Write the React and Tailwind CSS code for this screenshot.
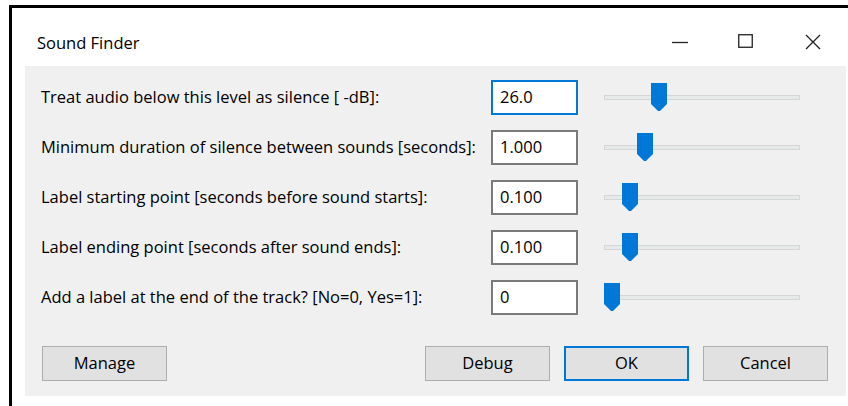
import React from "react";

const rows = [
    { label: "Treat audio below this level as silence [ -dB]:", value: "26.0", thumb: 47, focused: true },
    { label: "Minimum duration of silence between sounds [seconds]:", value: "1.000", thumb: 33 },
    { label: "Label starting point [seconds before sound starts]:", value: "0.100", thumb: 18 },
    { label: "Label ending point [seconds after sound ends]:", value: "0.100", thumb: 18 },
    { label: "Add a label at the end of the track? [No=0, Yes=1]:", value: "0", thumb: 0 },
];

const Slider = ({ pos }) => (
    <div className="relative w-[196px] h-[35px] flex items-center">
        <div className="w-full h-[5px] bg-[#e7eaea] border border-[#d6d6d6]" />
        <svg
            className="absolute top-[3px]"
            style={{ left: pos }}
            width="16"
            height="28"
            viewBox="0 0 16 28"
        >
            <path d="M0 0 H16 V21 L9 28 H7 L0 21 Z" fill="#0078d7" />
        </svg>
    </div>
);

const WinButton = ({ children, primary }) => (
    <button
        className={`h-[35px] w-[125px] bg-[#e1e1e1] text-[16.5px] text-black ${
            primary ? "border-2 border-[#0078d7]" : "border border-[#adadad]"
        }`}
    >
        {children}
    </button>
);

export default function App() {
    return (
        <div
            className="w-[848px] h-[406px] bg-white pt-[5px] pl-[9px] flex overflow-hidden"
            style={{ fontFamily: '"Open Sans", "Noto Sans", sans-serif' }}
        >
            <div className="flex-1 flex flex-col bg-white border-l-[3px] border-t-[3px] border-black">
                {/* Title bar */}
                <div className="h-[58px] flex items-center pl-[25px] pt-[12px]">
                    <span className="text-[16.5px] text-black leading-none">Sound Finder</span>
                    <div className="ml-auto flex items-center -mt-[3px]">
                        <svg width="16" height="16" viewBox="0 0 16 16" className="mr-[50px]">
                            <path d="M0 8.5 H16" stroke="#222" strokeWidth="1.3" />
                        </svg>
                        <svg width="15" height="15" viewBox="0 0 15 15" className="mr-[52px]">
                            <rect x="0.75" y="0.75" width="13.5" height="12.5" fill="none" stroke="#222" strokeWidth="1.3" />
                        </svg>
                        <svg width="16" height="16" viewBox="0 0 16 16" className="mr-[27px]">
                            <path d="M1 1 L15 15 M15 1 L1 15" stroke="#222" strokeWidth="1.3" />
                        </svg>
                    </div>
                </div>

                {/* Parameters panel */}
                <div className="ml-[13px] mr-[2px] bg-[#f0f0f0] pt-[14px] pb-[15px] flex flex-col">
                    <div className="flex flex-col gap-[15px]">
                        {rows.map((row) => (
                            <div key={row.label} className="flex items-center h-[35px]">
                                <span className="w-[466px] pl-[16px] text-[16.5px] text-black whitespace-nowrap">
                                    {row.label}
                                </span>
                                <div
                                    className={`w-[87px] h-[35px] bg-white flex items-center pl-[7px] text-[16.5px] text-black ${
                                        row.focused ? "border-2 border-[#0078d7]" : "border-2 border-[#7a7a7a]"
                                    }`}
                                >
                                    {row.value}
                                </div>
                                <div className="ml-[26px]">
                                    <Slider pos={row.thumb} />
                                </div>
                            </div>
                        ))}
                    </div>

                    <div className="mt-[31px] flex items-center pl-[17px] pr-[18px]">
                        <WinButton>Manage</WinButton>
                        <div className="ml-auto flex gap-[14px]">
                            <WinButton>Debug</WinButton>
                            <WinButton primary>OK</WinButton>
                            <WinButton>Cancel</WinButton>
                        </div>
                    </div>
                </div>
            </div>
        </div>
    );
}
